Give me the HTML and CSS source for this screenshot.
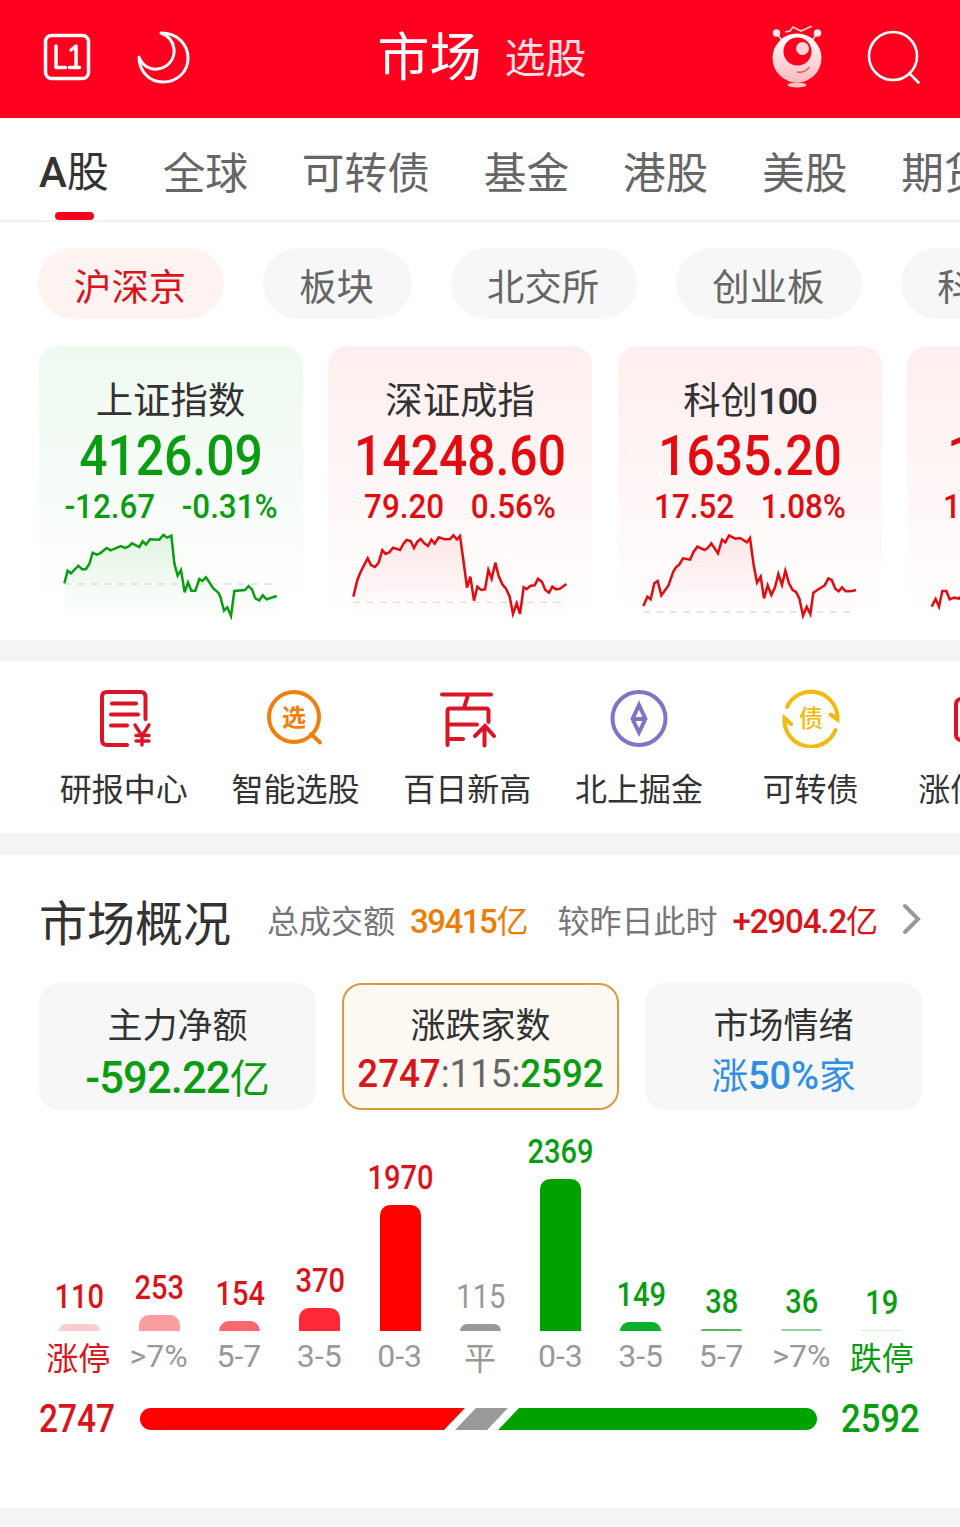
FILE: index.html
```html
<!DOCTYPE html>
<html lang="zh-CN">
<head>
    <meta charset="UTF-8">
    <meta name="viewport" content="width=device-width, initial-scale=1.0">
    <title>市场</title>
    <link rel="stylesheet" href="styles.css">
</head>
<body>
    <div class="header">
        <div class="header-side">
            <svg class="icon-level" width="50" height="50" viewBox="0 0 50 50">
                <rect x="3.5" y="3.5" width="43" height="43" rx="6"/>
                <path d="M14 14v21.500h9.500M29 18l5-4v21.500M27.500 35.500h10"/>
            </svg>
            <svg class="icon-moon" width="56" height="56" viewBox="0 0 56 56">
                <path d="M26 4C43 4 53 16 53 29C53 43 42 53 28 53C14 53 4 42 4 28C7 36 14 41 22 40C33 39 40 30 39 20C38 12 34 7 26 4Z"/>
            </svg>
        </div>
        <div class="header-title">
            <span class="title-main">市场</span>
            <span class="title-sub">选股</span>
        </div>
        <div class="header-side right">
            <svg class="icon-robot" width="52" height="64" viewBox="0 0 52 64">
                <defs>
                    <linearGradient id="robot" x1="0" y1="0" x2="0" y2="1">
                        <stop offset="0" stop-color="#fff"/>
                        <stop offset="1" stop-color="#ffb9bd"/>
                    </linearGradient>
                </defs>
                <path class="antenna" d="M6 7l5 8M46 7l-5 8M14 6l5-1 3-4 8 4 11-5"/>
                <circle cx="5.500" cy="7" r="3.800" fill="#ffe9ea"/>
                <circle cx="46.500" cy="7" r="3.800" fill="#ffe9ea"/>
                <circle cx="26" cy="32" r="24.500" fill="url(#robot)"/>
                <circle cx="26.500" cy="25.500" r="14" fill="#ff001e"/>
                <circle cx="31.500" cy="22.500" r="6.500" fill="#ffd5d7"/>
                <path class="smile" d="M26 46c5 1 10-1 12-5"/>
                <ellipse cx="26" cy="59" rx="9.500" ry="2.500" fill="#ffc4c7"/>
            </svg>
            <svg class="icon-search" width="56" height="56" viewBox="0 0 56 56">
                <circle cx="27" cy="27" r="24"/>
                <path d="M43.500 44.500l9 9"/>
            </svg>
        </div>
    </div>

    <div class="tabs">
        <a href="#" class="tab active"><span class="num">A</span>股</a>
        <a href="#" class="tab">全球</a>
        <a href="#" class="tab">可转债</a>
        <a href="#" class="tab">基金</a>
        <a href="#" class="tab">港股</a>
        <a href="#" class="tab">美股</a>
        <a href="#" class="tab">期货</a>
    </div>

    <div class="pills">
        <a href="#" class="pill active">沪深京</a>
        <a href="#" class="pill">板块</a>
        <a href="#" class="pill">北交所</a>
        <a href="#" class="pill">创业板</a>
        <a href="#" class="pill">科创板</a>
    </div>

    <svg class="defs" width="0" height="0">
        <defs>
            <linearGradient id="fill-down" x1="0" y1="0" x2="0" y2="1">
                <stop offset="0" stop-color="#00a000" stop-opacity="0.1"/>
                <stop offset="1" stop-color="#00a000" stop-opacity="0"/>
            </linearGradient>
            <linearGradient id="fill-up" x1="0" y1="0" x2="0" y2="1">
                <stop offset="0" stop-color="#e60012" stop-opacity="0.08"/>
                <stop offset="1" stop-color="#e60012" stop-opacity="0"/>
            </linearGradient>
        </defs>
    </svg>

    <div class="indexes">
        <div class="index-card down">
            <div class="index-name">上证指数</div>
            <div class="index-value num">4126.09</div>
            <div class="index-change num"><span>-12.67</span><span>-0.31%</span></div>
            <svg class="spark" viewBox="0 0 792 270">
                <path class="area" fill="url(#fill-down)" d="M76 270V160L86 122 96 130 118 107 130 118 141 117 151 102 161 68 173 74 183 70 203 54 215 61 245 48 258 54 268 50 279 40 301 51 311 34 321 44 333 28 361 29 373 15 385 23 397 17 406 100 416 137 426 120 437 187 447 157 457 182 469 182 481 147 490 153 501 142 523 175 538 188 544 200 555 242 565 232 576 258 586 183 618 180 629 168 639 178 649 205 661 211 671 196 683 208 713 198V270Z"/>
                <path class="base" d="M76 162H702"/>
                <path class="line" d="M76 160L86 122 96 130 118 107 130 118 141 117 151 102 161 68 173 74 183 70 203 54 215 61 245 48 258 54 268 50 279 40 301 51 311 34 321 44 333 28 361 29 373 15 385 23 397 17 406 100 416 137 426 120 437 187 447 157 457 182 469 182 481 147 490 153 501 142 523 175 538 188 544 200 555 242 565 232 576 258 586 183 618 180 629 168 639 178 649 205 661 211 671 196 683 208 713 198"/>
            </svg>
        </div>
        <div class="index-card up">
            <div class="index-name">深证成指</div>
            <div class="index-value num">14248.60</div>
            <div class="index-change num"><span>79.20</span><span>0.56%</span></div>
            <svg class="spark" viewBox="0 0 792 270">
                <path class="area" fill="url(#fill-up)" d="M76 270V200L88 150 98 125 119 85 129 105 141 111 152 98 163 60 173 72 184 67 195 53 216 60 226 42 236 30 248 33 258 54 268 35 278 27 289 40 300 48 310 29 320 41 332 22 351 28 366 27 376 16 387 28 396 18 406 90 417 173 427 140 438 212 448 170 460 180 471 178 481 120 491 146 502 98 512 138 523 163 534 176 545 200 555 252 566 220 576 252 587 172 596 177 608 167 620 166 630 146 642 156 652 180 663 188 673 170 684 178 696 176 715 162V270Z"/>
                <path class="base" d="M76 217H702"/>
                <path class="line" d="M76 200L88 150 98 125 119 85 129 105 141 111 152 98 163 60 173 72 184 67 195 53 216 60 226 42 236 30 248 33 258 54 268 35 278 27 289 40 300 48 310 29 320 41 332 22 351 28 366 27 376 16 387 28 396 18 406 90 417 173 427 140 438 212 448 170 460 180 471 178 481 120 491 146 502 98 512 138 523 163 534 176 545 200 555 252 566 220 576 252 587 172 596 177 608 167 620 166 630 146 642 156 652 180 663 188 673 170 684 178 696 176 715 162"/>
            </svg>
        </div>
        <div class="index-card up">
            <div class="index-name">科创<span class="num">100</span></div>
            <div class="index-value num">1635.20</div>
            <div class="index-change num"><span>17.52</span><span>1.08%</span></div>
            <svg class="spark" viewBox="0 0 792 270">
                <path class="area" fill="url(#fill-up)" d="M76 270V228L88 200 98 208 109 160 119 153 130 196 151 167 166 125 174 112 184 103 195 85 216 89 227 65 238 50 260 60 270 53 280 40 300 70 312 29 322 37 333 16 352 26 366 24 387 37 396 24 407 105 417 158 428 140 438 205 449 166 460 195 471 172 481 132 492 165 502 122 513 160 524 180 534 186 544 205 555 257 566 230 577 252 586 188 598 180 620 166 631 145 641 150 652 176 662 184 672 172 683 184 702 183 714 180V270Z"/>
                <path class="base" d="M76 246H702"/>
                <path class="line" d="M76 228L88 200 98 208 109 160 119 153 130 196 151 167 166 125 174 112 184 103 195 85 216 89 227 65 238 50 260 60 270 53 280 40 300 70 312 29 322 37 333 16 352 26 366 24 387 37 396 24 407 105 417 158 428 140 438 205 449 166 460 195 471 172 481 132 492 165 502 122 513 160 524 180 534 186 544 205 555 257 566 230 577 252 586 188 598 180 620 166 631 145 641 150 652 176 662 184 672 172 683 184 702 183 714 180"/>
            </svg>
        </div>
        <div class="index-card up">
            <div class="index-name"></div>
            <div class="index-value num">1463.20</div>
            <div class="index-change num"><span>13.52</span><span>0.93%</span></div>
            <svg class="spark" viewBox="0 0 792 270">
                <path class="line" d="M74 230L86 207 96 230 106 183 118 183 128 208 141 203 156 206 170 190"/>
            </svg>
        </div>
    </div>

    <div class="quick">
        <a href="#" class="quick-item">
            <svg width="60" height="60" viewBox="0 0 60 60" class="q-red">
                <path d="M51.500 31V9q0-5-5-5H13q-5 0-5 5v43q0 5 5 5h20"/>
                <path d="M18 15.500h24M17 26.500h27M17 37.500h16"/>
                <path class="yen" d="M41 37l7 11 7-11M48 48v9M42 47.500h13M42 53h13"/>
            </svg>
            <span>研报中心</span>
        </a>
        <a href="#" class="quick-item">
            <svg width="60" height="60" viewBox="0 0 60 60" class="q-orange">
                <circle cx="28" cy="29" r="25"/>
                <path d="M45 46l9 8.500"/>
                <text x="28" y="38" text-anchor="middle">选</text>
            </svg>
            <span>智能选股</span>
        </a>
        <a href="#" class="quick-item">
            <svg width="60" height="60" viewBox="0 0 60 60" class="q-red">
                <path d="M5 6.500h49M31 7l-4 13M10.500 57V23q0-2.500 2.500-2.500h36q2.500 0 2.500 2.500v11M11 36.500h29M11 51h15"/>
                <path d="M38 48l10-10 9 10M47.500 39v18.500"/>
            </svg>
            <span>百日新高</span>
        </a>
        <a href="#" class="quick-item">
            <svg width="60" height="60" viewBox="0 0 60 60" class="q-purple">
                <circle cx="30" cy="30.500" r="26.500"/>
                <path d="M30 17l-6.500 14L30 44.500l6.500-13.500zM23.500 31h13"/>
            </svg>
            <span>北上掘金</span>
        </a>
        <a href="#" class="quick-item">
            <svg width="60" height="60" viewBox="0 0 60 60" class="q-yellow">
                <path d="M6 19A26.500 26.500 0 0 1 56.500 31.500L49.500 26.500"/>
                <path d="M54.500 42A26.500 26.500 0 0 1 3.500 30L10 36"/>
                <text x="30" y="39" text-anchor="middle">债</text>
            </svg>
            <span>可转债</span>
        </a>
        <a href="#" class="quick-item">
            <svg width="60" height="60" viewBox="0 0 60 60" class="q-red">
                <rect x="4" y="11" width="52" height="41" rx="5"/>
            </svg>
            <span>涨停分析</span>
        </a>
    </div>

    <div class="overview">
        <div class="overview-head">
            <h2>市场概况</h2>
            <span class="label">总成交额</span>
            <span class="total"><span class="num">39415</span>亿</span>
            <span class="label compare">较昨日此时</span>
            <span class="diff"><span class="num">+2904.2</span>亿</span>
            <svg class="chevron" width="20" height="34" viewBox="0 0 20 34"><path d="M3 4l13 13L3 30"/></svg>
        </div>

        <div class="stats">
            <div class="stat">
                <div class="stat-name">主力净额</div>
                <div class="stat-value flow"><span class="num">-592.22</span>亿</div>
            </div>
            <div class="stat active">
                <div class="stat-name">涨跌家数</div>
                <div class="stat-value count num"><span class="c-up">2747</span><span class="c-flat">:115:</span><span class="c-down">2592</span></div>
            </div>
            <div class="stat">
                <div class="stat-name">市场情绪</div>
                <div class="stat-value mood">涨<span class="num">50%</span>家</div>
            </div>
        </div>

        <div class="chart">
            <div class="col up"><span class="num">110</span><div class="bar b1" style="height:7px"></div></div>
            <div class="col up"><span class="num">253</span><div class="bar b2" style="height:16px"></div></div>
            <div class="col up"><span class="num">154</span><div class="bar b3" style="height:10px"></div></div>
            <div class="col up"><span class="num">370</span><div class="bar b4" style="height:23px"></div></div>
            <div class="col up"><span class="num">1970</span><div class="bar b5" style="height:126px"></div></div>
            <div class="col flat"><span class="num">115</span><div class="bar b6" style="height:7px"></div></div>
            <div class="col down"><span class="num">2369</span><div class="bar b7" style="height:152px"></div></div>
            <div class="col down"><span class="num">149</span><div class="bar b8" style="height:9px"></div></div>
            <div class="col down"><span class="num">38</span><div class="bar b9" style="height:2px"></div></div>
            <div class="col down"><span class="num">36</span><div class="bar b10" style="height:2px"></div></div>
            <div class="col down"><span class="num">19</span><div class="bar b11" style="height:1px"></div></div>
        </div>
        <div class="axis">
            <span class="c-up">涨停</span>
            <span class="num">&gt;7%</span>
            <span class="num">5-7</span>
            <span class="num">3-5</span>
            <span class="num">0-3</span>
            <span>平</span>
            <span class="num">0-3</span>
            <span class="num">3-5</span>
            <span class="num">5-7</span>
            <span class="num">&gt;7%</span>
            <span class="c-down">跌停</span>
        </div>

        <div class="ratio">
            <span class="num rise">2747</span>
            <svg width="677" height="22" viewBox="0 0 677 22">
                <path fill="#ff0000" d="M11 0H325L304 22H11A11 11 0 0 1 11 0Z"/>
                <path fill="#999" d="M336 0H368L347 22H315Z"/>
                <path fill="#00a200" d="M379 0H666A11 11 0 0 1 666 22H358Z"/>
            </svg>
            <span class="num fall">2592</span>
        </div>
    </div>
</body>
</html>
```
FILE: styles.css
```css
* {
  box-sizing:border-box;
}
body {
  margin:0;
  width:960px;
  height:1527px;
  overflow:hidden;
  background:#f4f4f4;
  color:#333;
  font-family:"Noto Sans CJK SC", sans-serif;
}
a {
  color:inherit;
  text-decoration:none;
}
svg {
  display:block;
  flex-shrink:0;
  fill:none;
}
.num {
  font-family:Roboto, sans-serif;
  font-weight:500;
  line-height:1;
}
.defs {
  position:absolute;
}
.c-up {
  color:#d9141a;
}
.c-down {
  color:#0a9d12;
}
.c-flat {
  color:#666;
}

/* header */
.header {
  height:118px;
  padding:0 38px 4px 42px;
  display:flex;
  align-items:center;
  justify-content:space-between;
  background:#ff001e;
}
.header-side {
  width:180px;
  display:flex;
  align-items:center;
  gap:43px;
}
.header-side.right {
  justify-content:flex-end;
}
.icon-level,
.icon-moon,
.icon-search {
  stroke:#fff;
  stroke-width:3.5;
  stroke-linecap:round;
  stroke-linejoin:round;
}
.icon-moon {
  stroke-width:3;
}
.icon-search {
  stroke-width:2.6;
}
.icon-robot {
  margin-top:2px;
}
.antenna {
  stroke:#ffd5d7;
  stroke-width:1.6;
}
.smile {
  stroke:#f4525c;
  stroke-width:1.6;
}
.header-title {
  padding-bottom:7px;
  display:flex;
  align-items:center;
  gap:23px;
  color:#fff;
}
.title-main {
  font-size:52px;
  line-height:76px;
}
.title-sub {
  padding-top:2px;
  font-size:41px;
  line-height:60px;
  color:#ffdfe2;
}

/* market tabs */
.tabs {
  height:104px;
  padding-left:39px;
  display:flex;
  gap:53.800px;
  overflow:hidden;
  background:#fff;
  border-bottom:2px solid #f2f2f2;
}
.tab {
  position:relative;
  flex-shrink:0;
  height:102px;
  font-size:42.700px;
  line-height:104px;
  color:#666;
}
.tab.active {
  color:#333;
  font-size:42px;
  line-height:101px;
}
.tab.active::after {
  content:"";
  position:absolute;
  left:16px;
  bottom:0;
  width:39px;
  height:8px;
  border-radius:4px;
  background:#f2001c;
}

/* sub market pills */
.pills {
  padding:26px 0 27px 38px;
  display:flex;
  gap:39px;
  overflow:hidden;
  background:#fff;
}
.pill {
  flex-shrink:0;
  height:71px;
  padding:0 38px 0 36px;
  border-radius:36px;
  background:#f7f7f7;
  color:#666;
  font-size:37.400px;
  line-height:74px;
}
.pill.active {
  background:#fff3f2;
  color:#d9141a;
}

/* index cards */
.indexes {
  height:294px;
  padding-left:38.500px;
  display:flex;
  gap:25.600px;
  overflow:hidden;
  background:#fff;
}
.index-card {
  flex:0 0 264px;
  height:274px;
  padding-top:25px;
  border-radius:20px;
  text-align:center;
}
.index-card.down {
  color:#0a9d12;
  background:linear-gradient(#eef9f0, #fff);
}
.index-card.up {
  color:#e30b10;
  background:linear-gradient(#ffeeee, #fff);
}
.index-name {
  height:55px;
  color:#333;
  font-size:37.400px;
  line-height:55px;
}
.index-name .num {
  letter-spacing:-0.05em;
}
.index-value {
  font-size:55px;
  line-height:60px;
  transform:scaleX(0.905);
}
.index-change {
  display:flex;
  justify-content:center;
  gap:28px;
  font-size:33px;
  line-height:42px;
  transform:scaleX(0.95);
}
.spark {
  width:264px;
  height:90px;
  margin-top:2px;
}
.line {
  stroke:currentColor;
  stroke-width:7.5;
}
.base {
  stroke:#ddd;
  stroke-width:4;
  stroke-dasharray:20 20;
}

/* quick entries */
.quick {
  height:172px;
  margin-top:21px;
  padding:27px 0 0 38px;
  display:flex;
  overflow:hidden;
  background:#fff;
}
.quick-item {
  flex:0 0 171.700px;
  display:flex;
  flex-direction:column;
  align-items:center;
  gap:16px;
  font-size:32px;
  line-height:46px;
}
.quick-item svg {
  stroke-width:4;
  stroke-linecap:round;
}
.quick-item text {
  font-size:24px;
  font-weight:700;
  stroke:none;
}
.quick-item .yen {
  stroke-width:3.4;
}
.q-red {
  stroke:#dc1428;
}
.q-orange {
  stroke:#ef7f0e;
}
.q-orange text {
  fill:#ef7f0e;
}
.q-purple {
  stroke:#8074c8;
}
.q-yellow {
  stroke:#f2b90f;
}
.q-yellow text {
  font-weight:500;
  fill:#f2b90f;
}

/* overview */
.overview {
  height:653px;
  margin-top:22px;
  padding:30px 38px 0 39px;
  background:#fff;
}
.overview-head {
  height:68px;
  display:flex;
  align-items:center;
  white-space:nowrap;
  font-size:32px;
}
.overview-head h2 {
  margin:2px 36px 0 0;
  font-size:48px;
  font-weight:400;
}
.overview-head .num {
  font-size:33px;
  letter-spacing:-0.045em;
}
.overview-head .diff .num {
  letter-spacing:-0.033em;
}
.label {
  color:#777;
}
.compare {
  margin-left:29px;
}
.total {
  margin-left:15px;
  color:#ee7d08;
}
.diff {
  margin-left:15px;
  color:#d9141a;
}
.chevron {
  margin-left:auto;
  stroke:#999;
  stroke-width:4;
  stroke-linecap:round;
}
.stats {
  margin-top:30px;
  display:grid;
  grid-template-columns:repeat(3, minmax(0, 1fr));
  gap:26px;
}
.stat {
  height:127px;
  padding-top:14px;
  border-radius:20px;
  background:#f7f7f7;
  text-align:center;
}
.stat.active {
  padding-top:12px;
  border:2px solid #e0983f;
  background:#fff9f4;
}
.stat-name {
  font-size:35px;
  line-height:51px;
}
.stat-value {
  line-height:56px;
}
.flow {
  font-size:40px;
  color:#0a9d12;
}
.flow .num {
  font-size:43.500px;
  letter-spacing:-0.02em;
}
.count {
  font-size:39px;
  line-height:52px;
  transform:scaleX(0.94);
}
.mood {
  font-size:36.500px;
  line-height:52px;
  color:#2f8fe3;
}
.mood .num {
  font-size:38px;
}
.chart {
  height:221px;
  display:flex;
  align-items:flex-end;
}
.col {
  flex:1;
  display:flex;
  flex-direction:column;
  align-items:center;
  gap:7px;
  font-size:33px;
}
.col .num {
  line-height:40px;
  transform:scaleX(0.88);
}
.col.up {
  color:#d9141a;
}
.col.flat {
  color:#999;
}
.col.down {
  color:#0a9d12;
}
.bar {
  width:41px;
  border-radius:10px 10px 0 0;
}
.b1 {
  background:#fccdd0;
}
.b2 {
  background:#fc9da0;
}
.b3 {
  background:#fd686e;
}
.b4 {
  background:#ff2837;
}
.b5 {
  background:#ff0000;
}
.b6 {
  background:#999;
}
.b7 {
  background:#00a200;
}
.b8 {
  background:#0bb02c;
}
.b9 {
  background:#55b560;
}
.b10 {
  background:#93d09b;
}
.b11 {
  background:#d5efd8;
}
.axis {
  margin-left:-1px;
  display:flex;
  color:#999;
  font-size:32px;
}
.axis span {
  flex:1 1 0;
  width:0;
  display:flex;
  justify-content:center;
  white-space:nowrap;
  line-height:51px;
}
.axis .num,
.flat .num,
.c-flat {
  font-weight:400;
}
.ratio {
  margin-top:10px;
  display:flex;
  align-items:center;
  font-size:38px;
}
.ratio .num {
  flex-shrink:0;
  line-height:54px;
  transform-origin:left center;
}
.ratio .rise {
  width:100.500px;
  color:#d9141a;
  transform:scaleX(0.88);
}
.ratio .fall {
  margin-left:24px;
  color:#0a9d12;
  transform:scaleX(0.91);
}
```
